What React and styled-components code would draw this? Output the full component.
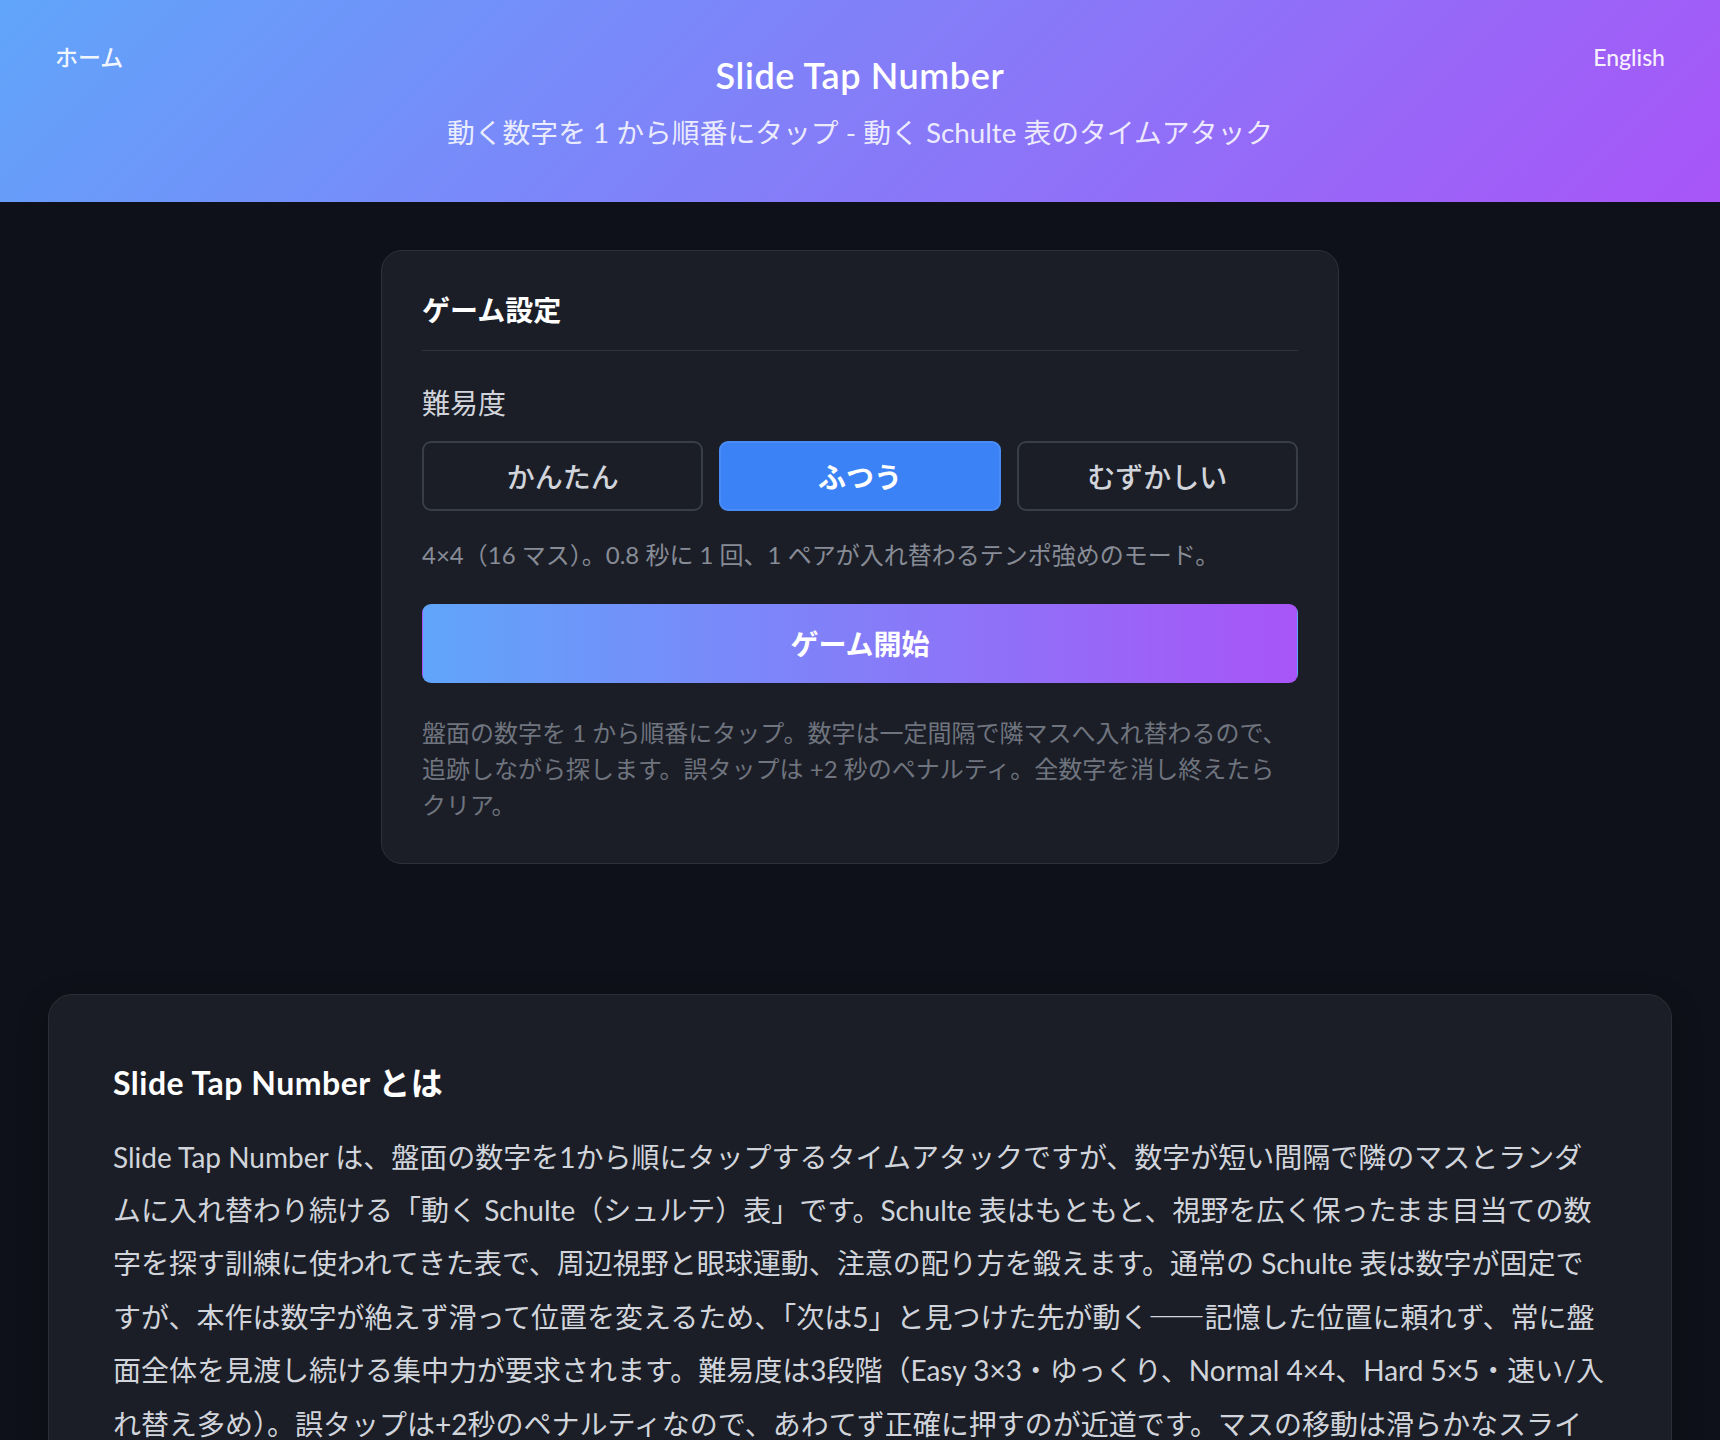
import React, { useState } from "react";
import styled, { createGlobalStyle } from "styled-components";

const GlobalStyle = createGlobalStyle`
  * {
    box-sizing: border-box;
  }

  body {
    margin: 0;
    background: #0f111a;
    color: #e5e7eb;
    font-family: "Lato", "Noto Sans CJK JP", sans-serif;
  }
`;

const levels = [
  {
    id: "easy",
    label: "かんたん",
    desc: "3×3（9 マス）。1.2 秒に 1 回、1 ペアが入れ替わるゆっくりモード。",
  },
  {
    id: "normal",
    label: "ふつう",
    desc: "4×4（16 マス）。0.8 秒に 1 回、1 ペアが入れ替わるテンポ強めのモード。",
  },
  {
    id: "hard",
    label: "むずかしい",
    desc: "5×5（25 マス）。0.5 秒に 1 回、2 ペアが入れ替わる上級者向けモード。",
  },
];

const Header = styled.header`
  display: grid;
  grid-template-columns: 1fr auto 1fr;
  align-items: start;
  padding: 40px 55px 48px;
  background: linear-gradient(135deg, #60a5fa 0%, #a855f7 100%);
  color: #fff;
`;

const NavLink = styled.a`
  justify-self: ${(p) => (p.$end ? "end" : "start")};
  font-size: 23px;
  line-height: 34px;
  font-weight: 500;
  color: rgba(255, 255, 255, 0.92);
  text-decoration: none;
  cursor: pointer;
`;

const TitleBlock = styled.div`
  padding-top: 14px;
  text-align: center;
`;

const Title = styled.h1`
  margin: 0;
  font-size: 36px;
  line-height: 42px;
  font-weight: 600;
  letter-spacing: 0.6px;
  color: #fff;
`;

const Subtitle = styled.p`
  margin: 16px 0 0;
  font-size: 27.8px;
  line-height: 42px;
  color: rgba(255, 255, 255, 0.86);
`;

const Main = styled.main`
  padding: 48px 48px 80px;
`;

const SettingsCard = styled.section`
  max-width: 958px;
  margin: 0 auto;
  padding: 40px;
  background: #1b1e27;
  border: 1px solid #2d313b;
  border-radius: 21px;
`;

const CardTitle = styled.h2`
  margin: 0;
  padding-bottom: 20px;
  border-bottom: 1px solid #2f333d;
  font-size: 28px;
  line-height: 38.5px;
  font-weight: 700;
  color: #fff;
`;

const FieldLabel = styled.div`
  margin: 32px 0 18px;
  font-size: 28px;
  line-height: 40px;
  color: #d1d5db;
`;

const LevelGrid = styled.div`
  display: grid;
  grid-template-columns: repeat(3, 1fr);
  gap: 16px;
`;

const LevelButton = styled.button`
  height: 70px;
  border-radius: 9px;
  border: 2px solid ${(p) => (p.$active ? "#4a8cf7" : "#393d47")};
  background: ${(p) => (p.$active ? "#3b82f6" : "transparent")};
  color: ${(p) => (p.$active ? "#fff" : "#d1d5db")};
  font-family: inherit;
  font-size: 28px;
  font-weight: ${(p) => (p.$active ? 700 : 500)};
  cursor: pointer;
`;

const LevelDesc = styled.p`
  margin: 26px 0 0;
  font-size: 24px;
  line-height: 36px;
  color: #878c96;
`;

const StartButton = styled.button`
  display: block;
  width: 100%;
  height: 79px;
  margin-top: 31px;
  border: 1px solid transparent;
  border-radius: 9px;
  background: linear-gradient(90deg, #60a5fa 0%, #a855f7 100%);
  color: #fff;
  font-family: inherit;
  font-size: 28px;
  font-weight: 700;
  cursor: pointer;
`;

const Notes = styled.p`
  margin: 32px 0 0;
  font-size: 24px;
  line-height: 36px;
  color: #6f747e;
`;

const AboutCard = styled.section`
  margin-top: 130px;
  padding: 68px 64px 64px;
  background: #1b1e27;
  border: 1px solid #2a2e38;
  border-radius: 24px;
  box-shadow: 0 10px 30px rgba(0, 0, 0, 0.25);
`;

const AboutTitle = styled.h2`
  margin: 0;
  font-size: 32px;
  line-height: 40px;
  font-weight: 700;
  letter-spacing: 0.5px;
  color: #fff;
`;

const AboutText = styled.p`
  margin: 28px 0 0;
  font-size: 28px;
  line-height: 53.2px;
  color: #d1d5db;
`;

// full-width dash pair, drawn by the CJK face
const Dash = styled.span`
  font-family: "Noto Sans CJK JP", sans-serif;
`;

export default function App() {
  const [level, setLevel] = useState("normal");
  const current = levels.find((l) => l.id === level);

  return (
    <div lang="ja">
      <GlobalStyle />
      <Header>
        <NavLink href="#">ホーム</NavLink>
        <TitleBlock>
          <Title>Slide Tap Number</Title>
          <Subtitle>動く数字を 1 から順番にタップ - 動く Schulte 表のタイムアタック</Subtitle>
        </TitleBlock>
        <NavLink href="#" $end>
          English
        </NavLink>
      </Header>

      <Main>
        <SettingsCard>
          <CardTitle>ゲーム設定</CardTitle>
          <FieldLabel>難易度</FieldLabel>
          <LevelGrid>
            {levels.map((l) => (
              <LevelButton
                key={l.id}
                $active={l.id === level}
                onClick={() => setLevel(l.id)}
              >
                {l.label}
              </LevelButton>
            ))}
          </LevelGrid>
          <LevelDesc>{current.desc}</LevelDesc>
          <StartButton>ゲーム開始</StartButton>
          <Notes>
            盤面の数字を 1 から順番にタップ。数字は一定間隔で隣マスへ入れ替わるので、追跡しながら探します。誤タップは +2 秒のペナルティ。全数字を消し終えたらクリア。
          </Notes>
        </SettingsCard>

        <AboutCard>
          <AboutTitle>Slide Tap Number とは</AboutTitle>
          <AboutText>
            Slide Tap Number は、盤面の数字を1から順にタップするタイムアタックですが、数字が短い間隔で隣のマスとランダムに入れ替わり続ける「動く Schulte（シュルテ）表」です。Schulte 表はもともと、視野を広く保ったまま目当ての数字を探す訓練に使われてきた表で、周辺視野と眼球運動、注意の配り方を鍛えます。通常の Schulte 表は数字が固定ですが、本作は数字が絶えず滑って位置を変えるため、「次は5」と見つけた先が動く<Dash>——</Dash>記憶した位置に頼れず、常に盤面全体を見渡し続ける集中力が要求されます。難易度は3段階（Easy 3×3・ゆっくり、Normal 4×4、Hard 5×5・速い/入れ替え多め）。誤タップは+2秒のペナルティなので、あわてず正確に押すのが近道です。マスの移動は滑らかなスライドアニメーションで描かれるので、動きを目で追う練習にもなります。
          </AboutText>
        </AboutCard>
      </Main>
    </div>
  );
}
